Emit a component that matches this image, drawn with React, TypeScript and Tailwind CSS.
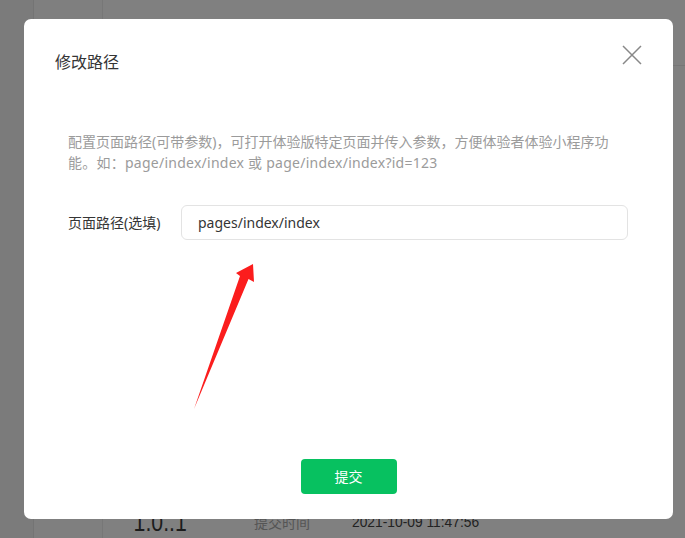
import React from "react";

const font = { fontFamily: '"Noto Sans", "Noto Sans CJK SC", sans-serif' };

export default function App() {
  return (
    <div className="relative w-[685px] h-[538px] overflow-hidden bg-[#808080]" style={font}>
      {/* background page */}
      <div className="flex h-full">
        <div className="w-[34px] h-full bg-[#7b7b7b] border-r border-[#747474]" />
        <div className="w-[69px] h-full bg-[#7f7f7f] border-r border-[#777777]" />
        <div className="flex-1 flex flex-col">
          <div className="h-[66px] border-b border-[#767676]" />
          <div className="flex-1" />
          <div className="flex items-center h-[30px] pb-[2px]">
            <div className="pl-[36px] w-[151px] text-[25px] leading-none text-[#1c1c1c]" style={{ fontFamily: '"Liberation Sans", sans-serif', transform: "scaleX(0.85)", transformOrigin: "left" }}>1.0..1</div>
            <div className="w-[98px] text-[14px] text-[#555555]" style={{ fontFamily: '"Noto Sans CJK SC", sans-serif' }}>提交时间</div>
            <div className="text-[15px] text-[#222222]" style={{ fontFamily: '"Liberation Sans", sans-serif', transform: "scaleX(0.92)", transformOrigin: "left" }}>2021-10-09 11:47:56</div>
          </div>
        </div>
      </div>

      {/* modal */}
      <div className="absolute left-[24px] top-[19px] w-[649px] h-[500px] bg-white rounded-[7px] flex flex-col">
        <div className="flex items-start justify-between pl-[31px] pr-[30px] pt-[31px]">
          <div className="text-[16px] leading-[24px] text-[#353535]">修改路径</div>
          <svg width="22" height="22" viewBox="0 0 22 22" className="mt-[-6px]">
            <path d="M2 2 L20 20 M20 2 L2 20" stroke="#888888" strokeWidth="1.5" fill="none" />
          </svg>
        </div>
        <div className="ml-[44px] mt-[57px] w-[570px] text-[14px] leading-[21px] text-[#9b9b9b] whitespace-nowrap">
          <span>配置页面路径(可带参数)，可打开体验版特定页面并传入参数，方便体验者体验小程序功</span>
          <br />
          <span className="tracking-[0.25px]">能。如：page/index/index 或 page/index/index?id=123</span>
        </div>
        <div className="flex items-center pl-[44px] pt-[32px]">
          <div className="w-[113px] text-[14px] text-[#353535]">页面路径(选填)</div>
          <div className="w-[447px] h-[35px] border border-[#e3e3e3] rounded-[6px] flex items-center pl-[16px] text-[14px] text-[#353535]">
            pages/index/index
          </div>
        </div>
        <div className="flex-1" />
        <div className="flex justify-center pb-[25px]">
          <button className="w-[96px] h-[35px] rounded-[4px] bg-[#07c160] text-white text-[14px]">提交</button>
        </div>
      </div>

      {/* red annotation arrow */}
      <svg className="absolute left-0 top-0 pointer-events-none" width="685" height="538">
        <polygon points="253,264 254,282 248.5,279 194,409 240,276 236,273" fill="#fb1d1d" />
      </svg>
    </div>
  );
}
